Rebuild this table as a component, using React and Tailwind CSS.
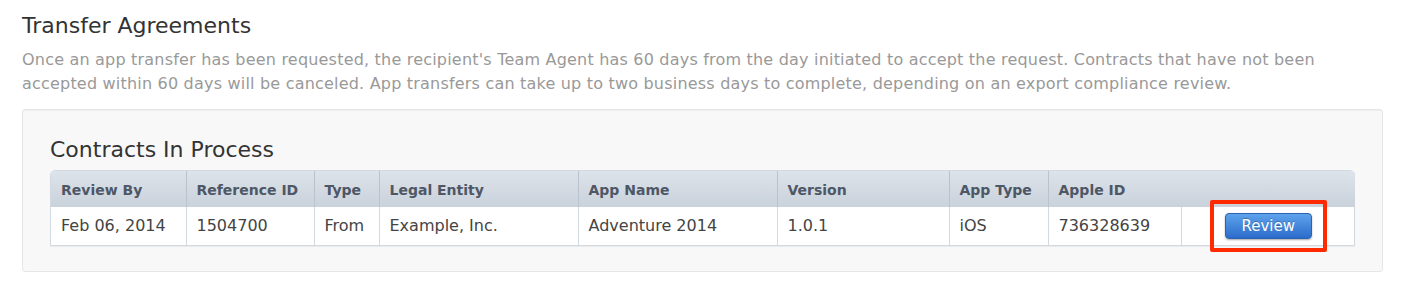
const COLUMNS = [
  { label: "Review By", width: 135 },
  { label: "Reference ID", width: 128 },
  { label: "Type", width: 65 },
  { label: "Legal Entity", width: 199 },
  { label: "App Name", width: 199 },
  { label: "Version", width: 172 },
  { label: "App Type", width: 99 },
  { label: "Apple ID", width: 133 },
  { label: "", width: 174 },
];

const CONTRACTS = [
  {
    id: "1504700",
    reviewBy: "Feb 06, 2014",
    type: "From",
    entity: "Example, Inc.",
    appName: "Adventure 2014",
    version: "1.0.1",
    appType: "iOS",
    appleId: "736328639",
  },
];

function ReviewButton() {
  return (
    <span className="relative inline-block align-middle">
      <button className="block h-[26px] w-[87px] rounded-[4px] border border-[#2b63b4] bg-gradient-to-b from-[#5ea3ec] to-[#2b6ccb] text-[15px] leading-[24px] text-white shadow-[0_1px_2px_rgba(0,0,0,0.35)] [text-shadow:0_-1px_0_rgba(0,0,0,0.25)]">
        Review
      </button>
      <span className="pointer-events-none absolute -left-[15px] -right-[15px] -top-[13px] -bottom-[13px] rounded-[2px] border-4 border-[#ff2a00]" />
    </span>
  );
}

export default function App() {
  return (
    <div className="min-h-[288px] w-[1404px] bg-white px-[22px] pt-[13px] font-['DejaVu_Sans',sans-serif]">
      <h1 className="text-[22px] leading-[26px] text-[#333]">Transfer Agreements</h1>
      <p className="mt-[9px] w-[1361px] text-[16px] leading-[24px] tracking-[0.2px] text-[#999]">
        Once an app transfer has been requested, the recipient's Team Agent has 60 days from the day initiated to accept the
        request. Contracts that have not been accepted within 60 days will be canceled. App transfers can take up to two
        business days to complete, depending on an export compliance review.
      </p>

      <div className="mt-[13px] w-[1361px] rounded-[3px] border border-[#e6e6e6] bg-[#f8f8f8] px-[27px] pt-[27px] pb-[25px] shadow-[inset_0_1px_0_#eee]">
        <h2 className="text-[22px] leading-[26px] text-[#333]">Contracts In Process</h2>

        <div className="mt-[7px] rounded-t-[5px] border border-[#d3d9e1] bg-white shadow-[0_1px_1px_rgba(0,0,0,0.06)]">
          <table className="w-full table-fixed border-collapse text-left">
            <colgroup>
              {COLUMNS.map((c, i) => (
                <col key={i} style={{ width: c.width }} />
              ))}
            </colgroup>
            <thead>
              <tr className="h-[36px] bg-gradient-to-b from-[#dde3ea] to-[#c9d1db]">
                {COLUMNS.map((c, i) => (
                  <th
                    key={i}
                    className={`px-[10px] pt-[2px] text-[14px] font-bold text-[#4d5766] ${
                      i > 0 && i < COLUMNS.length - 1 ? "border-l border-[#b9c3cf]" : ""
                    } ${i === 0 ? "rounded-tl-[4px]" : ""} ${i === COLUMNS.length - 1 ? "rounded-tr-[4px]" : ""}`}
                  >
                    {c.label}
                  </th>
                ))}
              </tr>
            </thead>
            <tbody>
              {CONTRACTS.map((row) => (
                <tr key={row.id} className="h-[38px] text-[16px] text-[#444]">
                  <td className="px-[10px]">{row.reviewBy}</td>
                  <td className="border-l border-[#d3d9e1] px-[10px]">{row.id}</td>
                  <td className="border-l border-[#d3d9e1] px-[10px]">{row.type}</td>
                  <td className="border-l border-[#d3d9e1] px-[10px]">{row.entity}</td>
                  <td className="border-l border-[#d3d9e1] px-[10px]">{row.appName}</td>
                  <td className="border-l border-[#d3d9e1] px-[10px]">{row.version}</td>
                  <td className="border-l border-[#d3d9e1] px-[10px]">{row.appType}</td>
                  <td className="border-l border-[#d3d9e1] px-[10px]">{row.appleId}</td>
                  <td className="border-l border-[#d3d9e1] text-center">
                    <ReviewButton />
                  </td>
                </tr>
              ))}
            </tbody>
          </table>
        </div>
      </div>
    </div>
  );
}
